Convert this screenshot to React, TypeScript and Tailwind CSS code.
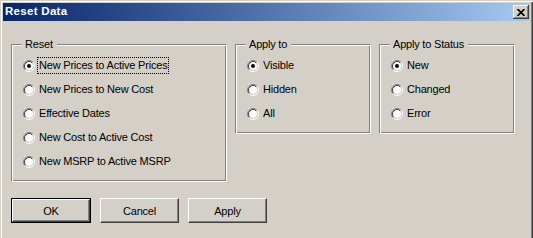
import type { ReactNode } from "react";

type Option = { label: string; checked?: boolean; focused?: boolean };

const resetOptions: Option[] = [
  { label: "New Prices to Active Prices", checked: true, focused: true },
  { label: "New Prices to New Cost" },
  { label: "Effective Dates" },
  { label: "New Cost to Active Cost" },
  { label: "New MSRP to Active MSRP" },
];

const applyToOptions: Option[] = [
  { label: "Visible", checked: true },
  { label: "Hidden" },
  { label: "All" },
];

const statusOptions: Option[] = [
  { label: "New", checked: true },
  { label: "Changed" },
  { label: "Error" },
];

function Radio({ checked }: { checked?: boolean }) {
  return (
    <svg width="12" height="12" viewBox="0 0 12 12" className="shrink-0">
      <circle cx="6" cy="6" r="4" fill="#fff" />
      <path d="M2.11 9.89 A5.5 5.5 0 0 1 9.89 2.11" stroke="#808080" fill="none" />
      <path d="M9.89 2.11 A5.5 5.5 0 0 1 2.11 9.89" stroke="#fff" fill="none" />
      <path d="M2.82 9.18 A4.5 4.5 0 0 1 9.18 2.82" stroke="#404040" fill="none" />
      <path d="M9.18 2.82 A4.5 4.5 0 0 1 2.82 9.18" stroke="#D4D0C8" fill="none" />
      {checked && <circle cx="6" cy="6" r="2" fill="#000" />}
    </svg>
  );
}

function RadioList({ options }: { options: Option[] }) {
  return (
    <div className="flex flex-col gap-[7px]">
      {options.map((opt) => (
        <div key={opt.label} className="flex h-[17px] items-center">
          <Radio checked={opt.checked} />
          <span
            className={
              opt.focused
                ? "ml-[2px] border border-dotted border-black px-[1px] leading-[15px] whitespace-nowrap"
                : "ml-[2px] border border-transparent px-[1px] leading-[15px] whitespace-nowrap"
            }
          >
            {opt.label}
          </span>
        </div>
      ))}
    </div>
  );
}

function GroupBox({
  title,
  className,
  children,
}: {
  title: string;
  className: string;
  children: ReactNode;
}) {
  return (
    <div
      className={`relative border border-t-[#808080] border-l-[#808080] border-r-white border-b-white pt-[12px] pl-[11px] shadow-[inset_1px_1px_#fff,inset_-1px_-1px_#808080] ${className}`}
    >
      <span className="absolute left-[10px] top-[-7px] bg-[#D4D0C8] pl-[3px] pr-[4px] leading-[13px]">
        {title}
      </span>
      {children}
    </div>
  );
}

function Button({ label, isDefault }: { label: string; isDefault?: boolean }) {
  const face = (
    <div className="flex h-full w-full items-center justify-center border border-t-white border-l-white border-r-[#404040] border-b-[#404040] pt-[1px] shadow-[inset_-1px_-1px_#808080]">
      {label}
    </div>
  );
  if (isDefault) {
    return <div className="h-[25px] w-[80px] border border-black">{face}</div>;
  }
  return <div className="h-[25px] w-[79px]">{face}</div>;
}

export default function App() {
  return (
    <div className="flex h-[238px] w-[533px] flex-col bg-[#D4D0C8] px-[3px] pt-[3px] font-['Liberation_Sans',Arial,sans-serif] text-[11px] tracking-[-0.2px] text-black shadow-[inset_1px_1px_#D4D0C8,inset_2px_2px_#fff,inset_-1px_0_#404040,inset_-2px_0_#808080]">
      <div className="flex h-[18px] shrink-0 items-center justify-between bg-linear-to-r from-[#0A246A] to-[#A6CAF0] pl-[2px] pr-[1px]">
        <span className="text-[11.5px] font-bold tracking-[0.3px] text-white">Reset Data</span>
        <div className="flex h-[14px] w-[16px] items-center justify-center bg-[#D4D0C8] shadow-[inset_-1px_-1px_#404040,inset_1px_1px_#fff,inset_-2px_-2px_#808080]">
          <svg width="8" height="7" viewBox="0 0 8 7">
            <path d="M0.5 0 L7.5 7 M7.5 0 L0.5 7" stroke="#000" strokeWidth="1.7" />
          </svg>
        </div>
      </div>

      <div className="ml-[8px] mt-[23px] flex items-start gap-2">
        <GroupBox title="Reset" className="h-[138px] w-[216px]">
          <RadioList options={resetOptions} />
        </GroupBox>
        <GroupBox title="Apply to" className="h-[90px] w-[136px]">
          <RadioList options={applyToOptions} />
        </GroupBox>
        <GroupBox title="Apply to Status" className="h-[90px] w-[136px]">
          <RadioList options={statusOptions} />
        </GroupBox>
      </div>

      <div className="ml-[8px] mt-[16px] flex gap-[9px]">
        <Button label="OK" isDefault />
        <Button label="Cancel" />
        <Button label="Apply" />
      </div>
    </div>
  );
}
